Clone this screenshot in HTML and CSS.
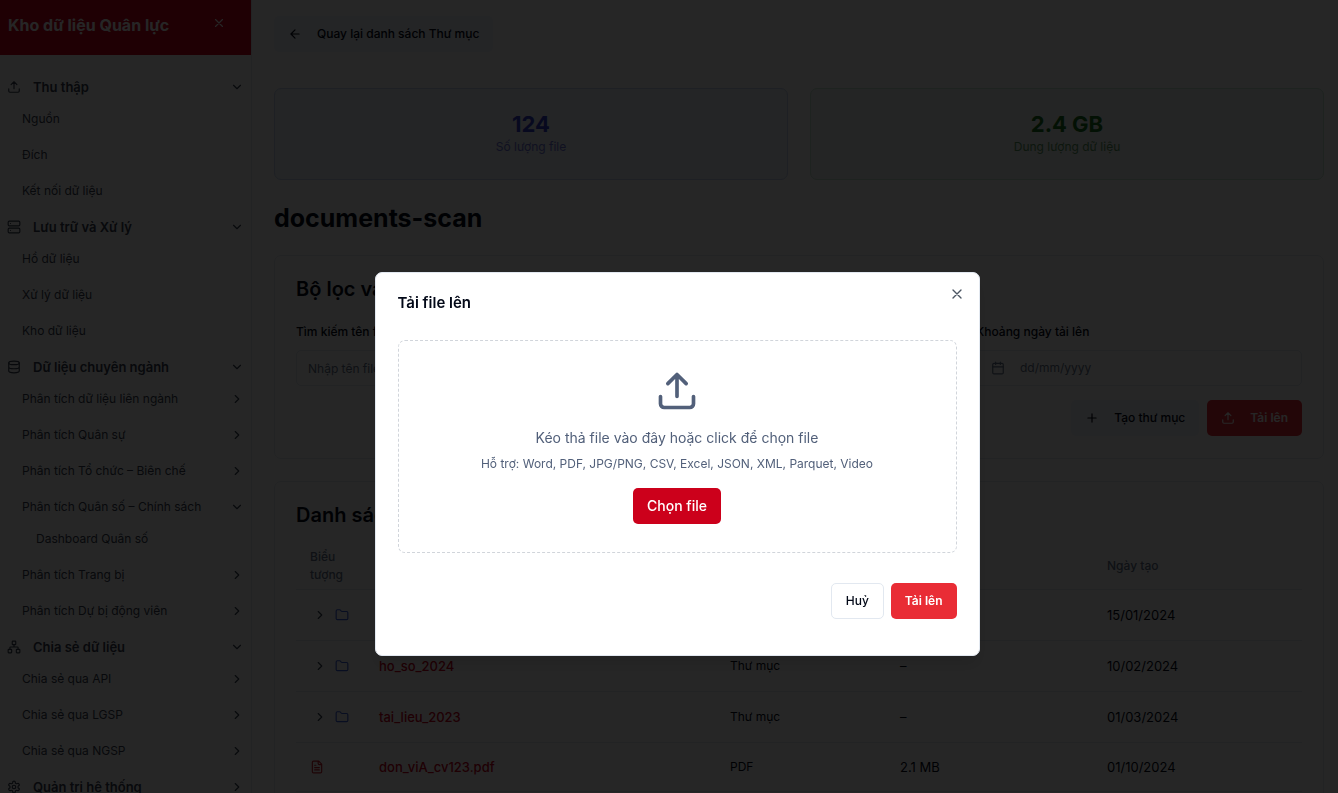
FILE: index.html
```html
<!DOCTYPE html>
<html lang="vi">
<head>
  <meta charset="UTF-8" />
  <meta name="viewport" content="width=device-width, initial-scale=1" />
  <title>Kho dữ liệu Quân lực</title>
  <link rel="stylesheet" href="styles.css">
</head>
<body>

  <!-- Bộ icon dùng chung -->
  <svg class="sprite" aria-hidden="true">
    <symbol id="i-upload" viewBox="0 0 24 24"><path d="M21 15v4a2 2 0 0 1-2 2H5a2 2 0 0 1-2-2v-4M17 8l-5-5-5 5M12 3v12"/></symbol>
    <symbol id="i-server" viewBox="0 0 24 24"><rect x="2" y="2" width="20" height="8" rx="2"/><rect x="2" y="14" width="20" height="8" rx="2"/><path d="M6 6h.01M6 18h.01"/></symbol>
    <symbol id="i-database" viewBox="0 0 24 24"><ellipse cx="12" cy="5" rx="9" ry="3"/><path d="M3 5v14a9 3 0 0 0 18 0V5M3 12a9 3 0 0 0 18 0"/></symbol>
    <symbol id="i-network" viewBox="0 0 24 24"><rect x="16" y="16" width="6" height="6" rx="1"/><rect x="2" y="16" width="6" height="6" rx="1"/><rect x="9" y="2" width="6" height="6" rx="1"/><path d="M5 16v-3a1 1 0 0 1 1-1h12a1 1 0 0 1 1 1v3M12 12V8"/></symbol>
    <symbol id="i-settings" viewBox="0 0 24 24"><path d="M12.22 2h-.44a2 2 0 0 0-2 2v.18a2 2 0 0 1-1 1.73l-.43.25a2 2 0 0 1-2 0l-.15-.08a2 2 0 0 0-2.73.73l-.22.38a2 2 0 0 0 .73 2.73l.15.1a2 2 0 0 1 1 1.72v.51a2 2 0 0 1-1 1.74l-.15.09a2 2 0 0 0-.73 2.73l.22.38a2 2 0 0 0 2.73.73l.15-.08a2 2 0 0 1 2 0l.43.25a2 2 0 0 1 1 1.73V20a2 2 0 0 0 2 2h.44a2 2 0 0 0 2-2v-.18a2 2 0 0 1 1-1.73l.43-.25a2 2 0 0 1 2 0l.15.08a2 2 0 0 0 2.73-.73l.22-.39a2 2 0 0 0-.73-2.73l-.15-.08a2 2 0 0 1-1-1.74v-.5a2 2 0 0 1 1-1.74l.15-.09a2 2 0 0 0 .73-2.73l-.22-.38a2 2 0 0 0-2.73-.73l-.15.08a2 2 0 0 1-2 0l-.43-.25a2 2 0 0 1-1-1.73V4a2 2 0 0 0-2-2z"/><circle cx="12" cy="12" r="3"/></symbol>
    <symbol id="i-down" viewBox="0 0 24 24"><path d="m6 9 6 6 6-6"/></symbol>
    <symbol id="i-right" viewBox="0 0 24 24"><path d="m9 18 6-6-6-6"/></symbol>
    <symbol id="i-back" viewBox="0 0 24 24"><path d="m12 19-7-7 7-7M19 12H5"/></symbol>
    <symbol id="i-close" viewBox="0 0 24 24"><path d="M18 6 6 18M6 6l12 12"/></symbol>
    <symbol id="i-plus" viewBox="0 0 24 24"><path d="M5 12h14M12 5v14"/></symbol>
    <symbol id="i-calendar" viewBox="0 0 24 24"><path d="M8 2v4M16 2v4M3 10h18"/><rect x="3" y="4" width="18" height="18" rx="2"/></symbol>
    <symbol id="i-folder" viewBox="0 0 24 24"><path d="M20 20a2 2 0 0 0 2-2V8a2 2 0 0 0-2-2h-7.9a2 2 0 0 1-1.69-.9L9.6 3.9A2 2 0 0 0 7.93 3H4a2 2 0 0 0-2 2v13a2 2 0 0 0 2 2Z"/></symbol>
    <symbol id="i-file" viewBox="0 0 24 24"><path d="M15 2H6a2 2 0 0 0-2 2v16a2 2 0 0 0 2 2h12a2 2 0 0 0 2-2V7ZM14 2v4a2 2 0 0 0 2 2h4M10 9H8M16 13H8M16 17H8"/></symbol>
  </svg>

  <div class="app">
    <aside class="sidebar">
      <header class="sidebar-header">
        <span class="brand">Kho dữ liệu Quân lực</span>
        <button class="icon-button" aria-label="Đóng menu"><svg class="icon"><use href="#i-close"/></svg></button>
      </header>

      <nav class="nav">
        <section class="nav-group">
          <button class="nav-title"><svg class="icon"><use href="#i-upload"/></svg><span>Thu thập</span><svg class="icon"><use href="#i-down"/></svg></button>
          <a class="nav-item" href="#">Nguồn</a>
          <a class="nav-item" href="#">Đích</a>
          <a class="nav-item" href="#">Kết nối dữ liệu</a>
        </section>

        <section class="nav-group">
          <button class="nav-title"><svg class="icon"><use href="#i-server"/></svg><span>Lưu trữ và Xử lý</span><svg class="icon"><use href="#i-down"/></svg></button>
          <a class="nav-item" href="#">Hồ dữ liệu</a>
          <a class="nav-item" href="#">Xử lý dữ liệu</a>
          <a class="nav-item" href="#">Kho dữ liệu</a>
        </section>

        <section class="nav-group">
          <button class="nav-title"><svg class="icon"><use href="#i-database"/></svg><span>Dữ liệu chuyên ngành</span><svg class="icon"><use href="#i-down"/></svg></button>
          <a class="nav-item" href="#">Phân tích dữ liệu liên ngành<svg class="icon"><use href="#i-right"/></svg></a>
          <a class="nav-item" href="#">Phân tích Quân sự<svg class="icon"><use href="#i-right"/></svg></a>
          <a class="nav-item" href="#">Phân tích Tổ chức – Biên chế<svg class="icon"><use href="#i-right"/></svg></a>
          <a class="nav-item" href="#">Phân tích Quân số – Chính sách<svg class="icon"><use href="#i-down"/></svg></a>
          <a class="nav-subitem" href="#">Dashboard Quân số</a>
          <a class="nav-item" href="#">Phân tích Trang bị<svg class="icon"><use href="#i-right"/></svg></a>
          <a class="nav-item" href="#">Phân tích Dự bị động viên<svg class="icon"><use href="#i-right"/></svg></a>
        </section>

        <section class="nav-group">
          <button class="nav-title"><svg class="icon"><use href="#i-network"/></svg><span>Chia sẻ dữ liệu</span><svg class="icon"><use href="#i-down"/></svg></button>
          <a class="nav-item" href="#">Chia sẻ qua API<svg class="icon"><use href="#i-right"/></svg></a>
          <a class="nav-item" href="#">Chia sẻ qua LGSP<svg class="icon"><use href="#i-right"/></svg></a>
          <a class="nav-item" href="#">Chia sẻ qua NGSP<svg class="icon"><use href="#i-right"/></svg></a>
        </section>

        <section class="nav-group">
          <button class="nav-title"><svg class="icon"><use href="#i-settings"/></svg><span>Quản trị hệ thống</span><svg class="icon"><use href="#i-right"/></svg></button>
        </section>
      </nav>
    </aside>

    <main class="main">
      <button class="button button-soft"><svg class="icon"><use href="#i-back"/></svg>Quay lại danh sách Thư mục</button>

      <div class="stats">
        <div class="stat stat-blue">
          <div class="stat-value">124</div>
          <div class="stat-label">Số lượng file</div>
        </div>
        <div class="stat stat-green">
          <div class="stat-value">2.4 GB</div>
          <div class="stat-label">Dung lượng dữ liệu</div>
        </div>
      </div>

      <h1>documents-scan</h1>

      <section class="card">
        <h2>Bộ lọc và tìm kiếm</h2>
        <div class="filters">
          <div class="field">
            <label for="name">Tìm kiếm tên file</label>
            <input class="control" id="name" type="text" placeholder="Nhập tên file...">
          </div>
          <div class="field">
            <label for="type">Loại file</label>
            <select class="control" id="type"><option>Tất cả</option></select>
          </div>
          <div class="field">
            <label for="date">Khoảng ngày tải lên</label>
            <div class="control date-control">
              <svg class="icon"><use href="#i-calendar"/></svg>
              <input id="date" type="text" placeholder="dd/mm/yyyy">
            </div>
          </div>
        </div>
        <div class="actions">
          <button class="button button-soft"><svg class="icon"><use href="#i-plus"/></svg>Tạo thư mục</button>
          <button class="button button-red"><svg class="icon"><use href="#i-upload"/></svg>Tải lên</button>
        </div>
      </section>

      <section class="card">
        <h2>Danh sách file</h2>
        <table class="files">
          <thead>
            <tr>
              <th class="col-icon">Biểu tượng</th>
              <th>Tên</th>
              <th class="col-type">Loại</th>
              <th class="col-size">Dung lượng</th>
              <th class="col-date">Ngày tạo</th>
            </tr>
          </thead>
          <tbody>
            <tr>
              <td><div class="file-icon"><button class="expand" aria-label="Mở rộng"><svg class="icon"><use href="#i-right"/></svg></button><svg class="icon folder"><use href="#i-folder"/></svg></div></td>
              <td><a href="#">hop_dong_2024</a></td>
              <td class="type">Thư mục</td>
              <td>–</td>
              <td>15/01/2024</td>
            </tr>
            <tr>
              <td><div class="file-icon"><button class="expand" aria-label="Mở rộng"><svg class="icon"><use href="#i-right"/></svg></button><svg class="icon folder"><use href="#i-folder"/></svg></div></td>
              <td><a href="#">ho_so_2024</a></td>
              <td class="type">Thư mục</td>
              <td>–</td>
              <td>10/02/2024</td>
            </tr>
            <tr>
              <td><div class="file-icon"><button class="expand" aria-label="Mở rộng"><svg class="icon"><use href="#i-right"/></svg></button><svg class="icon folder"><use href="#i-folder"/></svg></div></td>
              <td><a href="#">tai_lieu_2023</a></td>
              <td class="type">Thư mục</td>
              <td>–</td>
              <td>01/03/2024</td>
            </tr>
            <tr class="row-file">
              <td><div class="file-icon"><svg class="icon pdf"><use href="#i-file"/></svg></div></td>
              <td><a href="#">don_viA_cv123.pdf</a></td>
              <td class="type">PDF</td>
              <td>2.1 MB</td>
              <td>01/10/2024</td>
            </tr>
          </tbody>
        </table>
      </section>
    </main>
  </div>

  <!-- Hộp thoại tải file -->
  <div class="overlay">
    <div class="modal" role="dialog" aria-modal="true" aria-labelledby="modal-title">
      <button class="modal-close" aria-label="Đóng"><svg class="icon"><use href="#i-close"/></svg></button>
      <h2 class="modal-title" id="modal-title">Tải file lên</h2>
      <div class="dropzone">
        <svg class="icon dropzone-icon"><use href="#i-upload"/></svg>
        <p class="dropzone-text">Kéo thả file vào đây hoặc click để chọn file</p>
        <p class="dropzone-hint">Hỗ trợ: Word, PDF, JPG/PNG, CSV, Excel, JSON, XML, Parquet, Video</p>
        <button class="button button-primary">Chọn file</button>
      </div>
      <div class="modal-footer">
        <button class="button button-outline">Huỷ</button>
        <button class="button button-red">Tải lên</button>
      </div>
    </div>
  </div>

</body>
</html>
```
FILE: styles.css
```css
* {
  box-sizing: border-box;
}

body {
  margin: 0;
  font-family: Inter, "Liberation Sans", sans-serif;
  font-size: 12px;
  line-height: 18px;
  color: #020817;
  background: #fff;
}

h1, h2, p {
  margin: 0;
}

a {
  color: inherit;
  text-decoration: none;
}

button, input, select {
  font: inherit;
  color: inherit;
}

button {
  padding: 0;
  border: 0;
  background: none;
  cursor: pointer;
}

.sprite {
  position: absolute;
  width: 0;
  height: 0;
}

.icon {
  flex: none;
  width: 14px;
  height: 14px;
  fill: none;
  stroke: currentColor;
  stroke-width: 2;
  stroke-linecap: round;
  stroke-linejoin: round;
}

.app {
  display: flex;
  height: 100vh;
  overflow: hidden;
}

/* Thanh bên */
.sidebar {
  flex: none;
  width: 252px;
  border-right: 1px solid #e2e8f0;
  overflow: hidden;
}

.sidebar-header {
  display: flex;
  align-items: center;
  justify-content: space-between;
  height: 55px;
  padding: 0 25px 5px 8px;
  background: #cc001b;
  color: #fff;
}

.brand {
  font-size: 16px;
  font-weight: 700;
}

.nav {
  padding: 18px 7px 0;
}

.nav-group {
  display: flex;
  flex-direction: column;
  margin-bottom: 4px;
  color: #374151;
}

.nav-title {
  display: flex;
  align-items: center;
  gap: 12px;
  height: 28px;
  font-size: 13px;
  font-weight: 600;
  text-align: left;
}

.nav-title span {
  flex: 1;
}

.nav-item {
  display: flex;
  align-items: center;
  justify-content: space-between;
  height: 36px;
  padding-left: 15px;
}

.nav-subitem {
  height: 28px;
  margin-bottom: 4px;
  padding-left: 29px;
  line-height: 28px;
}

/* Nội dung chính */
.main {
  flex: 1;
  min-width: 0;
  padding: 16px 14px 0 22px;
  overflow: hidden;
}

.button {
  display: inline-flex;
  align-items: center;
  justify-content: center;
  gap: 15px;
  height: 36px;
  padding: 0 14px;
  border-radius: 5px;
  font-weight: 500;
}

.button-soft {
  background: #eff3fb;
}

.button-red {
  background: #e92c35;
  color: #fff;
  font-weight: 600;
}

.button-primary {
  background: #cc001b;
  color: #fff;
  font-size: 14px;
}

.button-outline {
  border: 1px solid #e2e8f0;
  background: #fff;
}

.stats {
  display: grid;
  grid-template-columns: 1fr 1fr;
  gap: 22px;
  margin-top: 36px;
}

.stat {
  padding: 21px 22px 23px;
  border: 1px solid;
  border-radius: 7px;
  text-align: center;
}

.stat-blue {
  border-color: #c6d4f0;
  background: #eff3fb;
  color: #343fd0;
}

.stat-green {
  border-color: #c8e6d4;
  background: #f0f7f3;
  color: #15701f;
}

.stat-value {
  font-size: 22px;
  font-weight: 700;
  line-height: 28px;
}

.stat-label {
  opacity: 0.7;
}

h1 {
  margin: 23px 0 22px;
  font-size: 25px;
  font-weight: 700;
  line-height: 30px;
}

.card {
  margin-bottom: 22px;
  padding: 22px 21px;
  border: 1px solid #e2e8f0;
  border-radius: 7px;
}

.card h2 {
  font-size: 20px;
  font-weight: 600;
  line-height: 22px;
}

.filters {
  display: grid;
  grid-template-columns: repeat(3, 1fr);
  gap: 14px;
  margin-top: 23px;
}

.field label {
  display: block;
  margin-bottom: 9px;
  font-weight: 500;
}

.control {
  width: 100%;
  height: 36px;
  padding: 0 11px;
  border: 1px solid #e2e8f0;
  border-radius: 5px;
  background: #fff;
}

.control::placeholder,
.date-control input::placeholder {
  color: #64748b;
  opacity: 1;
}

.date-control {
  display: flex;
  align-items: center;
  gap: 15px;
  padding: 0 14px;
  color: #64748b;
}

.date-control input {
  flex: 1;
  min-width: 0;
  padding: 0;
  border: 0;
  background: none;
}

.actions {
  display: flex;
  justify-content: flex-end;
  gap: 8px;
  margin-top: 14px;
}

/* Bảng file */
.files {
  width: 100%;
  margin-top: 18px;
  border-collapse: collapse;
  table-layout: fixed;
}

.files th {
  height: 45px;
  padding: 0 14px;
  color: #64748b;
  font-weight: 500;
  text-align: left;
}

.files td {
  height: 51px;
  padding: 0 14px;
  font-size: 13px;
}

.files .row-file td {
  height: 49px;
}

.files .type {
  font-size: 12px;
}

.files tr {
  border-bottom: 1px solid #e2e8f0;
}

.files a {
  color: #cc001b;
  font-weight: 500;
}

.col-icon {
  width: 69px;
}

.col-type {
  width: 170px;
}

.col-size {
  width: 207px;
}

.col-date {
  width: 209px;
}

.file-icon {
  display: flex;
  align-items: center;
  gap: 5px;
}

.expand {
  display: flex;
  padding: 3px;
  color: #374151;
}

.folder {
  color: #3b5fd9;
}

.pdf {
  color: #cc1f2d;
}

/* Hộp thoại */
.overlay {
  position: fixed;
  inset: 0;
  display: flex;
  align-items: flex-start;
  justify-content: center;
  padding: 272px 0 0 16px;
  background: rgba(0, 0, 0, 0.85);
}

.modal {
  position: relative;
  width: 605px;
  padding: 21px 22px 36px;
  border: 1px solid #e2e8f0;
  border-radius: 7px;
  background: #fff;
  box-shadow: 0 10px 15px rgba(0, 0, 0, 0.1);
}

.modal-close {
  position: absolute;
  top: 13px;
  right: 14px;
  display: flex;
  color: #4b5563;
}

.modal-close .icon {
  width: 16px;
  height: 16px;
}

.modal-title {
  font-size: 15px;
  font-weight: 600;
  line-height: 18px;
}

.dropzone {
  display: flex;
  flex-direction: column;
  align-items: center;
  margin-top: 28px;
  padding: 28px;
  border: 1px dashed #d1d5db;
  border-radius: 7px;
  color: #52607a;
}

.dropzone-icon {
  width: 44px;
  height: 44px;
}

.dropzone-text {
  margin-top: 14px;
  font-size: 14px;
  line-height: 22px;
}

.dropzone-hint {
  margin: 6px 0 15px;
}

.modal-footer {
  display: flex;
  justify-content: flex-end;
  gap: 7px;
  margin-top: 30px;
}
```
